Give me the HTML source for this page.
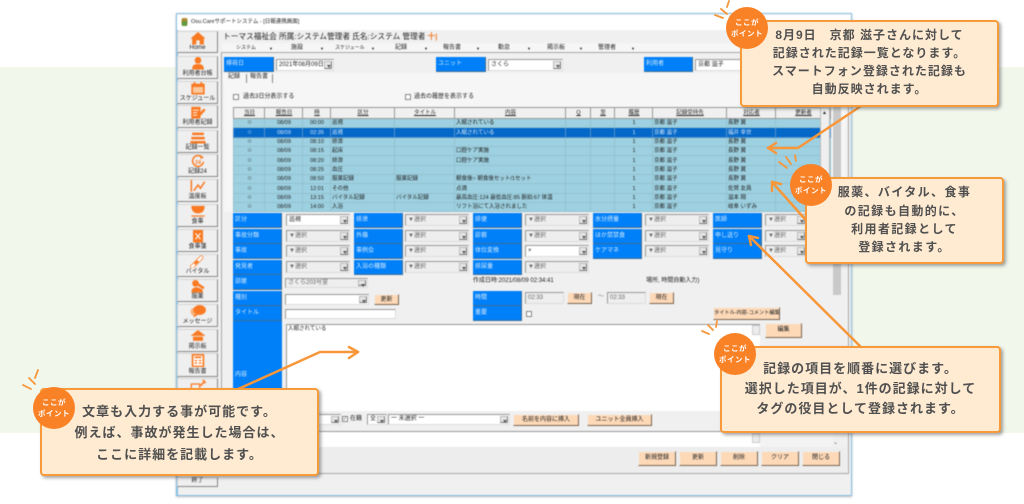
<!DOCTYPE html>
<html lang="ja"><head><meta charset="utf-8"><title>記録画面</title>
<style>
*{box-sizing:border-box}
html,body{margin:0;padding:0;width:1024px;height:504px;overflow:hidden;background:#fff}
body{position:relative;font-family:"Liberation Sans","Noto Sans CJK JP",sans-serif;color:#333}
.a{position:absolute}
#band{left:0;top:67px;width:1024px;height:366px;background:#f2f7ec}
#win{left:176px;top:13px;width:676px;height:483px;background:#f0f0f0;border:1.5px solid #86bfe3;box-shadow:0 1px 2px #bbb;overflow:hidden}
#ui{left:0;top:0;width:1024px;height:504px;filter:blur(.45px)}
.t{position:absolute;font-size:6px;line-height:9px;white-space:nowrap;color:#222}
.b{position:absolute;left:177px;width:41px;background:#efefef;border:1px solid #d5d5d5;border-right:1.5px solid #888;border-bottom:1.5px solid #888;text-align:center;font-size:6px;color:#222}
.b span{position:absolute;left:0;right:0;bottom:0;line-height:7px;white-space:nowrap}
.b svg{position:absolute;left:9px;top:0;width:22px;height:12.5px}
.l{position:absolute;background:#0080f8;color:#d8ecff;font-size:6px;line-height:15px;padding-left:2px;border:1px solid #3c6f99;border-width:0 1px 1px 0;white-space:nowrap;height:15px}
.s{position:absolute;height:12px;background:#eee;border:1px solid #999;border-right-color:#ddd;border-bottom-color:#ddd;font-size:6px;line-height:10px;padding-left:2px;color:#666;white-space:nowrap;overflow:hidden}
.s.w{background:#fff;color:#222}
.s i{position:absolute;right:1px;top:1px;bottom:1px;width:8px;background:#e6e6e6;border:1px solid #bbb;border-right-color:#777;border-bottom-color:#777}
.s i:after{content:"";position:absolute;left:1.5px;top:2.5px;border:2px solid transparent;border-top:3px solid #555;border-bottom:0}
.p{position:absolute;background:#fdd9b8;border:1px solid #eee;border-right:1.5px solid #7a6552;border-bottom:1.5px solid #7a6552;font-size:6px;text-align:center;color:#222;white-space:nowrap;line-height:10px}
.c{position:absolute;width:6px;height:6px;background:#fff;border:1px solid #888}
table{position:absolute;left:233px;top:107px;width:597px;border-collapse:collapse;table-layout:fixed;font-size:5.5px}
td,th{padding:0 0 0 1px;height:9.35px;line-height:8px;overflow:hidden;white-space:nowrap;border:1px solid #93c2d1;font-weight:400;color:#222}
th{height:11px;background:#f0f0f0;border:1px solid #999;text-decoration:underline;text-align:center}
tr.r td{background:#9dd0e0}
tr.x td{background:#0468c8;color:#d5e8fa;border-color:#4f8fc7}
.m{text-align:center}
.o{font-size:7px}
.box{position:absolute;background:#ffebd2;border:2.5px solid #f89a3a;border-radius:4px;box-shadow:2px 2px 3px rgba(90,90,90,.55);text-align:center;font-weight:700;font-size:12px;letter-spacing:1px;color:#505050;white-space:nowrap}
.box div{position:absolute;left:0;right:0}
.pt{position:absolute;width:42px;height:42px;border-radius:50%;background:#f98126;color:#fff;font-size:7.5px;font-weight:700;line-height:11px;text-align:center;padding-top:10px;letter-spacing:.5px}
</style></head><body>
<div class="a" id="band"></div>
<div class="a" id="ui">
<div class="a" id="win"></div>

<!-- title -->
<div class="a" style="left:177px;top:15px;width:674px;height:15px;background:#fff"></div>
<svg class="a" style="left:180px;top:17px" width="9" height="10"><rect x="1.5" y="1" width="6" height="8" rx="2" fill="#b58a35"/><rect x="2" y="4" width="5" height="5" rx="1" fill="#5f9a3c"/></svg>
<div class="t" style="left:191px;top:18px;font-size:5.5px">Osu.Careサポートシステム - [日報連携画面]</div>
<div class="t" style="left:223px;top:31px;font-size:7.7px;line-height:12px;color:#222">トーマス福祉会 所属:システム管理者 氏名:システム 管理者 <span style="color:#f08030;font-weight:700">十|</span></div>

<!-- menu -->
<div class="a" style="left:222px;top:43px;width:626px;height:10px;background:#f6f6f6"></div>
<div class="t" style="left:236px;top:44px;font-size:5px">システム</div><div class="t" style="left:269px;top:44px;font-size:4px">▼</div>
<div class="t" style="left:291px;top:44px">施設</div><div class="t" style="left:320px;top:44px;font-size:4px">▼</div>
<div class="t" style="left:335px;top:44px;font-size:5px">スケジュール</div><div class="t" style="left:371px;top:44px;font-size:4px">▼</div>
<div class="t" style="left:395px;top:44px">記録</div><div class="t" style="left:424px;top:44px;font-size:4px">▼</div>
<div class="t" style="left:443px;top:44px">報告書</div><div class="t" style="left:476px;top:44px;font-size:4px">▼</div>
<div class="t" style="left:498px;top:44px">勤怠</div><div class="t" style="left:527px;top:44px;font-size:4px">▼</div>
<div class="t" style="left:547px;top:44px">掲示板</div><div class="t" style="left:579px;top:44px;font-size:4px">▼</div>
<div class="t" style="left:598px;top:44px">管理者</div><div class="t" style="left:631px;top:44px;font-size:4px">▼</div>

<!-- sidebar -->
<div class="a" style="left:176px;top:30px;width:2px;height:465px;background:#86bfe3"></div>
<div class="b" style="top:31px;height:22px"><svg viewBox="0 0 22 15"><path d="M11 0L20 8H18V15H13V10H9V15H4V8H2Z" fill="#f97a22"/></svg><span>Home</span></div>
<div class="b" style="top:56px;height:23px"><svg viewBox="0 0 22 15"><circle cx="11" cy="4" r="4" fill="#f97a22"/><path d="M4 15C4 9 7 8.500 11 8.500S18 9 18 15Z" fill="#f97a22"/></svg><span>利用者台帳</span></div>
<div class="b" style="top:81px;height:23px"><svg viewBox="0 0 22 15"><rect x="3" y="2" width="16" height="13" fill="#f97a22"/><rect x="5" y="6" width="12" height="7" fill="#fbc79c"/><rect x="6" y="0" width="2" height="3" fill="#f97a22"/><rect x="14" y="0" width="2" height="3" fill="#f97a22"/></svg><span>スケジュール</span></div>
<div class="b" style="top:105px;height:23px"><svg viewBox="0 0 22 15"><rect x="3" y="1" width="11" height="14" fill="#f97a22"/><path d="M5 5H12M5 8H10M5 11H10" stroke="#fff"/><path d="M11 13L19 4" stroke="#f97a22" stroke-width="3"/></svg><span>利用者記録</span></div>
<div class="b" style="top:130px;height:23px"><svg viewBox="0 0 22 15"><path d="M4 2H18V5H4ZM3 7H19V10H3ZM2 12H20V15H2Z" fill="#f97a22"/></svg><span>記録一覧</span></div>
<div class="b" style="top:154px;height:23px"><svg viewBox="0 0 22 15"><path d="M16 3A6.500 6.500 0 1 0 17.500 8" fill="none" stroke="#f97a22" stroke-width="1.800"/><path d="M14 0L18 3L14 5Z" fill="#f97a22"/><text x="11" y="10.500" font-size="6.500" font-weight="700" fill="#f97a22" text-anchor="middle">24</text></svg><span>記録24</span></div>
<div class="b" style="top:179px;height:23px"><svg viewBox="0 0 22 15"><path d="M3 0V14" stroke="#f97a22" stroke-width="1.800"/><path d="M6 13L11 6L14 10L19 2" fill="none" stroke="#f97a22" stroke-width="1.800"/></svg><span>温度板</span></div>
<div class="b" style="top:204px;height:23px"><svg viewBox="0 0 22 15"><path d="M3 1H19C19 7 16 10 11 10S3 7 3 1Z" fill="#f97a22"/><rect x="3" y="12.500" width="16" height="1.500" fill="#f97a22"/></svg><span>食事</span></div>
<div class="b" style="top:229px;height:23px"><svg viewBox="0 0 22 15"><rect x="5" y="0" width="12" height="15" fill="#f97a22"/><path d="M8 4L14 11M14 4L8 11" stroke="#fff" stroke-width="1.300"/></svg><span>食事箋</span></div>
<div class="b" style="top:254px;height:23px"><svg viewBox="0 0 22 15"><path d="M4 14L15 3" stroke="#f97a22" stroke-width="5" stroke-linecap="round"/><path d="M4 14L15 3" stroke="#fff" stroke-width="3.200" stroke-linecap="round"/><path d="M7 11L11 7" stroke="#f97a22" stroke-width="3"/></svg><span>バイタル</span></div>
<div class="b" style="top:279px;height:23px"><svg viewBox="0 0 22 15"><circle cx="8" cy="4" r="4" fill="#f97a22"/><path d="M9 4L18 10" stroke="#f97a22" stroke-width="3"/><path d="M3 15C3 9 8 8 11 9S17 11 17 15Z" fill="#f97a22"/></svg><span>服薬</span></div>
<div class="b" style="top:304px;height:23px"><svg viewBox="0 0 22 15"><ellipse cx="7" cy="8" rx="5" ry="5" fill="#fbb27c"/><ellipse cx="13" cy="6" rx="7.500" ry="6" fill="#f97a22"/><path d="M7 11L5 15L11 12Z" fill="#f97a22"/></svg><span>メッセージ</span></div>
<div class="b" style="top:329px;height:23px"><svg viewBox="0 0 22 15"><path d="M11 0L20 7H2Z" fill="#f97a22"/><rect x="5" y="8" width="12" height="5" fill="#f97a22"/></svg><span>掲示板</span></div>
<div class="b" style="top:353px;height:24px"><svg viewBox="0 0 22 15"><path d="M4.500 1H17.500V15H4.500Z" fill="#fff" stroke="#f97a22" stroke-width="2"/><path d="M7 4H15" stroke="#f97a22" stroke-width="2"/><path d="M7 8H10M12 8H15M7 11H10M12 11H15" stroke="#f97a22" stroke-width="1.500"/></svg><span>報告書</span></div>
<div class="b" style="top:378px;height:24px"><svg viewBox="0 0 22 15"><rect x="3" y="6" width="10" height="7" fill="none" stroke="#f97a22" stroke-width="1.500"/><path d="M14 8L19 3M17 1L20 5" stroke="#f97a22" stroke-width="2"/></svg></div>
<div class="b" style="top:477px;height:10px"><span style="line-height:9px">終了</span></div>

<!-- main panel -->
<div class="a" style="left:221px;top:52px;width:628px;height:422px;background:#f0f0f0;border:1px solid #a8a8a8;border-width:1px 1.5px 1.5px 1px"></div>
<div class="a" style="left:224px;top:83px;width:622px;height:129px;background:#f6f6f6"></div>
<div class="a" style="left:833px;top:100px;width:8px;height:195px;background:#c9c9c9"></div>

<div class="l" style="left:224px;top:57px;width:50px">帰荷日</div>
<div class="s w" style="left:276px;top:59px;width:58px">2021年08月09日<i></i></div>
<div class="l" style="left:436px;top:57px;width:50px">ユニット</div>
<div class="s w" style="left:488px;top:59px;width:75px">さくら<i></i></div>
<div class="l" style="left:644px;top:57px;width:49px">利用者</div>
<div class="s w" style="left:695px;top:59px;width:50px">京都 滋子</div>

<div class="a" style="left:223px;top:73px;width:620px;height:10px;background:#f6f6f6"></div>
<div class="t" style="left:228px;top:73px">記録</div>
<div class="a" style="left:246px;top:74px;width:1px;height:9px;background:#888"></div>
<div class="t" style="left:250px;top:73px">報告書</div>
<div class="a" style="left:272px;top:74px;width:1px;height:9px;background:#888"></div>

<div class="c" style="left:233px;top:94px"></div><div class="t" style="left:243px;top:92.500px">過去3日分表示する</div>
<div class="c" style="left:405px;top:94px"></div><div class="t" style="left:414px;top:92.500px">過去の履歴を表示する</div>

<table>
<colgroup><col style="width:31px"><col style="width:38px"><col style="width:28px"><col style="width:64px"><col style="width:60px"><col style="width:111px"><col style="width:25px"><col style="width:24px"><col style="width:38px"><col style="width:74px"><col style="width:49px"><col style="width:55px"></colgroup>
<tr><th>当日</th><th>報告日</th><th>時</th><th>区分</th><th>タイトル</th><th>内容</th><th>Q</th><th>至</th><th>履歴</th><th>記録受持先</th><th>対応者</th><th>更新者</th></tr>
<tr class="r"><td class="m o">○</td><td class="m">08/09</td><td class="m">00:00</td><td>巡視</td><td></td><td>入眠されている</td><td></td><td></td><td class="m">1</td><td>京都 滋子</td><td>長野 翼</td><td></td></tr>
<tr class="x"><td class="m o">○</td><td class="m">08/09</td><td class="m">02:35</td><td>巡視</td><td></td><td>入眠されている</td><td></td><td></td><td class="m">1</td><td>京都 滋子</td><td>福井 幸世</td><td></td></tr>
<tr class="r"><td class="m o">○</td><td class="m">08/09</td><td class="m">08:10</td><td>排泄</td><td></td><td></td><td></td><td></td><td class="m">1</td><td>京都 滋子</td><td>長野 翼</td><td></td></tr>
<tr class="r"><td class="m o">○</td><td class="m">08/09</td><td class="m">08:15</td><td>起床</td><td></td><td>口腔ケア実施</td><td></td><td></td><td class="m">1</td><td>京都 滋子</td><td>長野 翼</td><td></td></tr>
<tr class="r"><td class="m o">○</td><td class="m">08/09</td><td class="m">08:20</td><td>排泄</td><td></td><td>口腔ケア実施</td><td></td><td></td><td class="m">1</td><td>京都 滋子</td><td>長野 翼</td><td></td></tr>
<tr class="r"><td class="m o">○</td><td class="m">08/09</td><td class="m">08:25</td><td>血圧</td><td></td><td></td><td></td><td></td><td class="m">1</td><td>京都 滋子</td><td>長野 翼</td><td></td></tr>
<tr class="r"><td class="m o">○</td><td class="m">08/09</td><td class="m">08:50</td><td>服薬記録</td><td>服薬記録</td><td>朝食後○ 朝食後セット/1セット</td><td></td><td></td><td class="m">1</td><td>京都 滋子</td><td>長野 翼</td><td></td></tr>
<tr class="r"><td class="m o">○</td><td class="m">08/09</td><td class="m">12:01</td><td>その他</td><td></td><td>点滴</td><td></td><td></td><td class="m">1</td><td>京都 滋子</td><td>佐賀 友員</td><td></td></tr>
<tr class="r"><td class="m o">○</td><td class="m">08/09</td><td class="m">13:15</td><td>バイタル記録</td><td>バイタル記録</td><td style="overflow:visible">最高血圧:124 最低血圧:85 脈拍:67 体温</td><td></td><td></td><td class="m">1</td><td>京都 滋子</td><td>滋本 翔</td><td></td></tr>
<tr class="r"><td class="m o">○</td><td class="m">08/09</td><td class="m">14:00</td><td>入浴</td><td></td><td>リフト浴にて入浴されました</td><td></td><td></td><td class="m">1</td><td>京都 滋子</td><td>岐阜 いずみ</td><td></td></tr>
</table>
<div class="a" style="left:820px;top:107px;width:10px;height:105px;background:#efefef;border:1px solid #bbb"></div>
<div class="t" style="left:822px;top:109px;font-size:5px">▲</div>

<!-- form -->
<div class="l" style="left:233px;top:213px;width:49px">区分</div><div class="s w" style="left:286px;top:214px;width:64px">巡視<i></i></div>
<div class="l" style="left:354px;top:213px;width:49px">排泄</div><div class="s" style="left:405px;top:214px;width:64px">▼選択<i></i></div>
<div class="l" style="left:473px;top:213px;width:49px">排便</div><div class="s" style="left:525px;top:214px;width:64px">▼選択<i></i></div>
<div class="l" style="left:593px;top:213px;width:49px">水分摂量</div><div class="s" style="left:645px;top:214px;width:64px">▼選択<i></i></div>
<div class="l" style="left:713px;top:213px;width:49px">医師</div><div class="s" style="left:765px;top:214px;width:42px">▼選択<i></i></div>

<div class="l" style="left:233px;top:229px;width:49px">事故分類</div><div class="s" style="left:286px;top:230px;width:64px">▼選択<i></i></div>
<div class="l" style="left:354px;top:229px;width:49px">外傷</div><div class="s" style="left:405px;top:230px;width:64px">▼選択<i></i></div>
<div class="l" style="left:473px;top:229px;width:49px">診察</div><div class="s" style="left:525px;top:230px;width:64px">▼選択<i></i></div>
<div class="l" style="left:593px;top:229px;width:49px">ほか禁禁食</div><div class="s" style="left:645px;top:230px;width:64px">▼選択<i></i></div>
<div class="l" style="left:713px;top:229px;width:49px">申し送り</div><div class="s" style="left:765px;top:230px;width:42px">▼選択<i></i></div>

<div class="l" style="left:233px;top:244px;width:49px">事故</div><div class="s" style="left:286px;top:245px;width:64px">▼選択<i></i></div>
<div class="l" style="left:354px;top:244px;width:49px">事例会</div><div class="s" style="left:405px;top:245px;width:64px">▼選択<i></i></div>
<div class="l" style="left:473px;top:244px;width:49px">体位変換</div><div class="s w" style="left:525px;top:245px;width:64px">×<i></i></div>
<div class="l" style="left:593px;top:244px;width:49px">ケアマネ</div><div class="s" style="left:645px;top:245px;width:64px">▼選択<i></i></div>
<div class="l" style="left:713px;top:244px;width:49px">見守り</div><div class="s" style="left:765px;top:245px;width:42px">▼選択<i></i></div>

<div class="l" style="left:233px;top:260px;width:49px">発見者</div><div class="s" style="left:286px;top:261px;width:64px">▼選択<i></i></div>
<div class="l" style="left:354px;top:260px;width:49px">入浴の種類</div><div class="s" style="left:405px;top:261px;width:64px">▼選択<i></i></div>
<div class="l" style="left:473px;top:260px;width:49px">排尿量</div><div class="s" style="left:525px;top:261px;width:64px">▼選択<i></i></div>

<div class="l" style="left:233px;top:275px;width:49px">部屋</div><div class="s" style="left:285px;top:278px;width:83px;height:10px;line-height:8px">さくら203号室<i></i></div>
<div class="t" style="left:473px;top:277px">作成日時:2021/08/09 02:34:41</div>
<div class="t" style="left:646px;top:277px">場所, 時間自動入力)</div>

<div class="l" style="left:233px;top:291px;width:49px">種別</div><div class="s w" style="left:285px;top:294px;width:84px;height:11px;line-height:9px"><i></i></div>
<div class="p" style="left:374px;top:294px;width:25px;height:11px">更新</div>
<div class="l" style="left:473px;top:291px;width:49px">時間</div>
<div class="s" style="left:525px;top:292px;width:39px">02:33</div>
<div class="p" style="left:567px;top:292px;width:25px;height:12px">現在</div>
<div class="t" style="left:598px;top:293px;color:#888">～</div>
<div class="s" style="left:607px;top:292px;width:39px">02:33</div>
<div class="p" style="left:649px;top:292px;width:25px;height:12px">現在</div>

<div class="l" style="left:233px;top:306px;width:49px">タイトル</div><div class="s w" style="left:285px;top:309px;width:111px;height:10px"></div>
<div class="l" style="left:473px;top:306px;width:49px">重要</div><div class="c" style="left:526px;top:310.500px"></div>
<div class="p" style="left:713px;top:307px;width:67px;height:13px;line-height:11px;font-size:5.2px">タイトル-内容-コメント編集</div>

<div class="a" style="left:233px;top:321px;width:49px;height:110px;background:#0080f8"></div>
<div class="t" style="left:235px;top:371px;color:#d8ecff">内容</div>
<div class="a" style="left:286px;top:324px;width:474px;height:88px;background:#fff;border:1px solid #999;border-width:1.500px 0 0 1.500px"></div>
<div class="t" style="left:288px;top:325px;font-size:5.5px">入眠されている</div>
<div class="a" style="left:752px;top:325px;width:8px;height:10px;background:#ececec;border:1px solid #ccc"></div>
<div class="p" style="left:765px;top:323px;width:37px;height:15px;line-height:13px">編集</div>

<div class="a" style="left:286px;top:411px;width:474px;height:20px;background:#f0f0f0"></div>
<div class="s" style="left:300px;top:414px;width:41px;height:11px;background:#fff"><i></i></div>
<div class="c" style="left:342px;top:416px;font-size:5px;line-height:4px;text-align:center;color:#333;overflow:hidden">✓</div><div class="t" style="left:350px;top:415px">在籍</div>
<div class="s w" style="left:367px;top:414px;width:20px;height:11px;line-height:9px">全<i></i></div>
<div class="s w" style="left:388px;top:414px;width:122px;height:11px;line-height:9px">一 未選択 一<i></i></div>
<div class="p" style="left:513px;top:414px;width:66px;height:12px">名前を内容に挿入</div>
<div class="p" style="left:587px;top:414px;width:65px;height:12px">ユニット全員挿入</div>
<div class="a" style="left:286px;top:431px;width:474px;height:16px;background:#fff;border-top:1.500px solid #999"></div>
<div class="a" style="left:752px;top:433px;width:8px;height:10px;background:#ececec;border:1px solid #ccc"></div>
<div class="a" style="left:760px;top:425px;width:73px;height:22px;background:#f3f3f3"></div>
<div class="t" style="left:833px;top:439px;color:#666">⌄</div>
<div class="a" style="left:222px;top:447px;width:625px;height:26px;background:#ededed"></div>
<div class="p" style="left:638px;top:451px;width:38px;height:15px;line-height:13px">新規登録</div>
<div class="p" style="left:679px;top:451px;width:38px;height:15px;line-height:13px">更新</div>
<div class="p" style="left:720px;top:451px;width:38px;height:15px;line-height:13px">削除</div>
<div class="p" style="left:761px;top:451px;width:38px;height:15px;line-height:13px">クリア</div>
<div class="p" style="left:802px;top:451px;width:38px;height:15px;line-height:13px">閉じる</div>
</div>

<!-- arrows and rays -->
<svg class="a" style="left:0;top:0" width="1024" height="504" fill="none" stroke="#f8963a" stroke-width="2.500" stroke-linecap="round" stroke-linejoin="round">
<path d="M864 104L798 148H768"/><path d="M776 143L768 148L776 153"/>
<path d="M820 236L772 182"/><path d="M772 191L772 182L781 184"/>
<path d="M870 356L749 236"/><path d="M751 245L749 236L758 238"/>
<path d="M236 390L320 352H358"/><path d="M349 347L358 352L349 358"/>
<g stroke-width="1.800">
<path d="M715 15L723 18M721 9L727 14M729 1L727 7"/>
<path d="M779 162L787 168M786 157L791 164M795 155L796 161"/>
<path d="M702 331L709 334M708 325L713 330M717 321L716 327"/>
<path d="M23 385L31 389M29 378L35 384M38 370L35 378"/>
</g></svg>

<!-- callouts -->
<div class="box" style="left:740px;top:20px;width:259px;height:87px">
<div style="top:4px">8月9日　京都 滋子さんに対して</div>
<div style="top:22px">記録された記録一覧となります。</div>
<div style="top:40px">スマートフォン登録された記録も</div>
<div style="top:58px">自動反映されます。</div></div>
<div class="pt" style="left:726px;top:7px">ここが<br>ポイント</div>

<div class="box" style="left:805px;top:177px;width:199px;height:87px;letter-spacing:1.400px">
<div style="top:4px">服薬、バイタル、食事</div>
<div style="top:23px">の記録も自動的に、</div>
<div style="top:41px">利用者記録として</div>
<div style="top:59px">登録されます。</div></div>
<div class="pt" style="left:790px;top:164px">ここが<br>ポイント</div>

<div class="box" style="left:720px;top:346px;width:281px;height:87px;font-size:13px">
<div style="top:10px">記録の項目を順番に選びます。</div>
<div style="top:30px">選択した項目が、1件の記録に対して</div>
<div style="top:50px">タグの役目として登録されます。</div></div>
<div class="pt" style="left:714px;top:333px">ここが<br>ポイント</div>

<div class="box" style="left:40px;top:388px;width:279px;height:88px;font-size:13px">
<div style="top:11px">文章も入力する事が可能です。</div>
<div style="top:32px">例えば、事故が発生した場合は、</div>
<div style="top:54px">ここに詳細を記載します。</div></div>
<div class="pt" style="left:33px;top:387px">ここが<br>ポイント</div>
</body></html>
